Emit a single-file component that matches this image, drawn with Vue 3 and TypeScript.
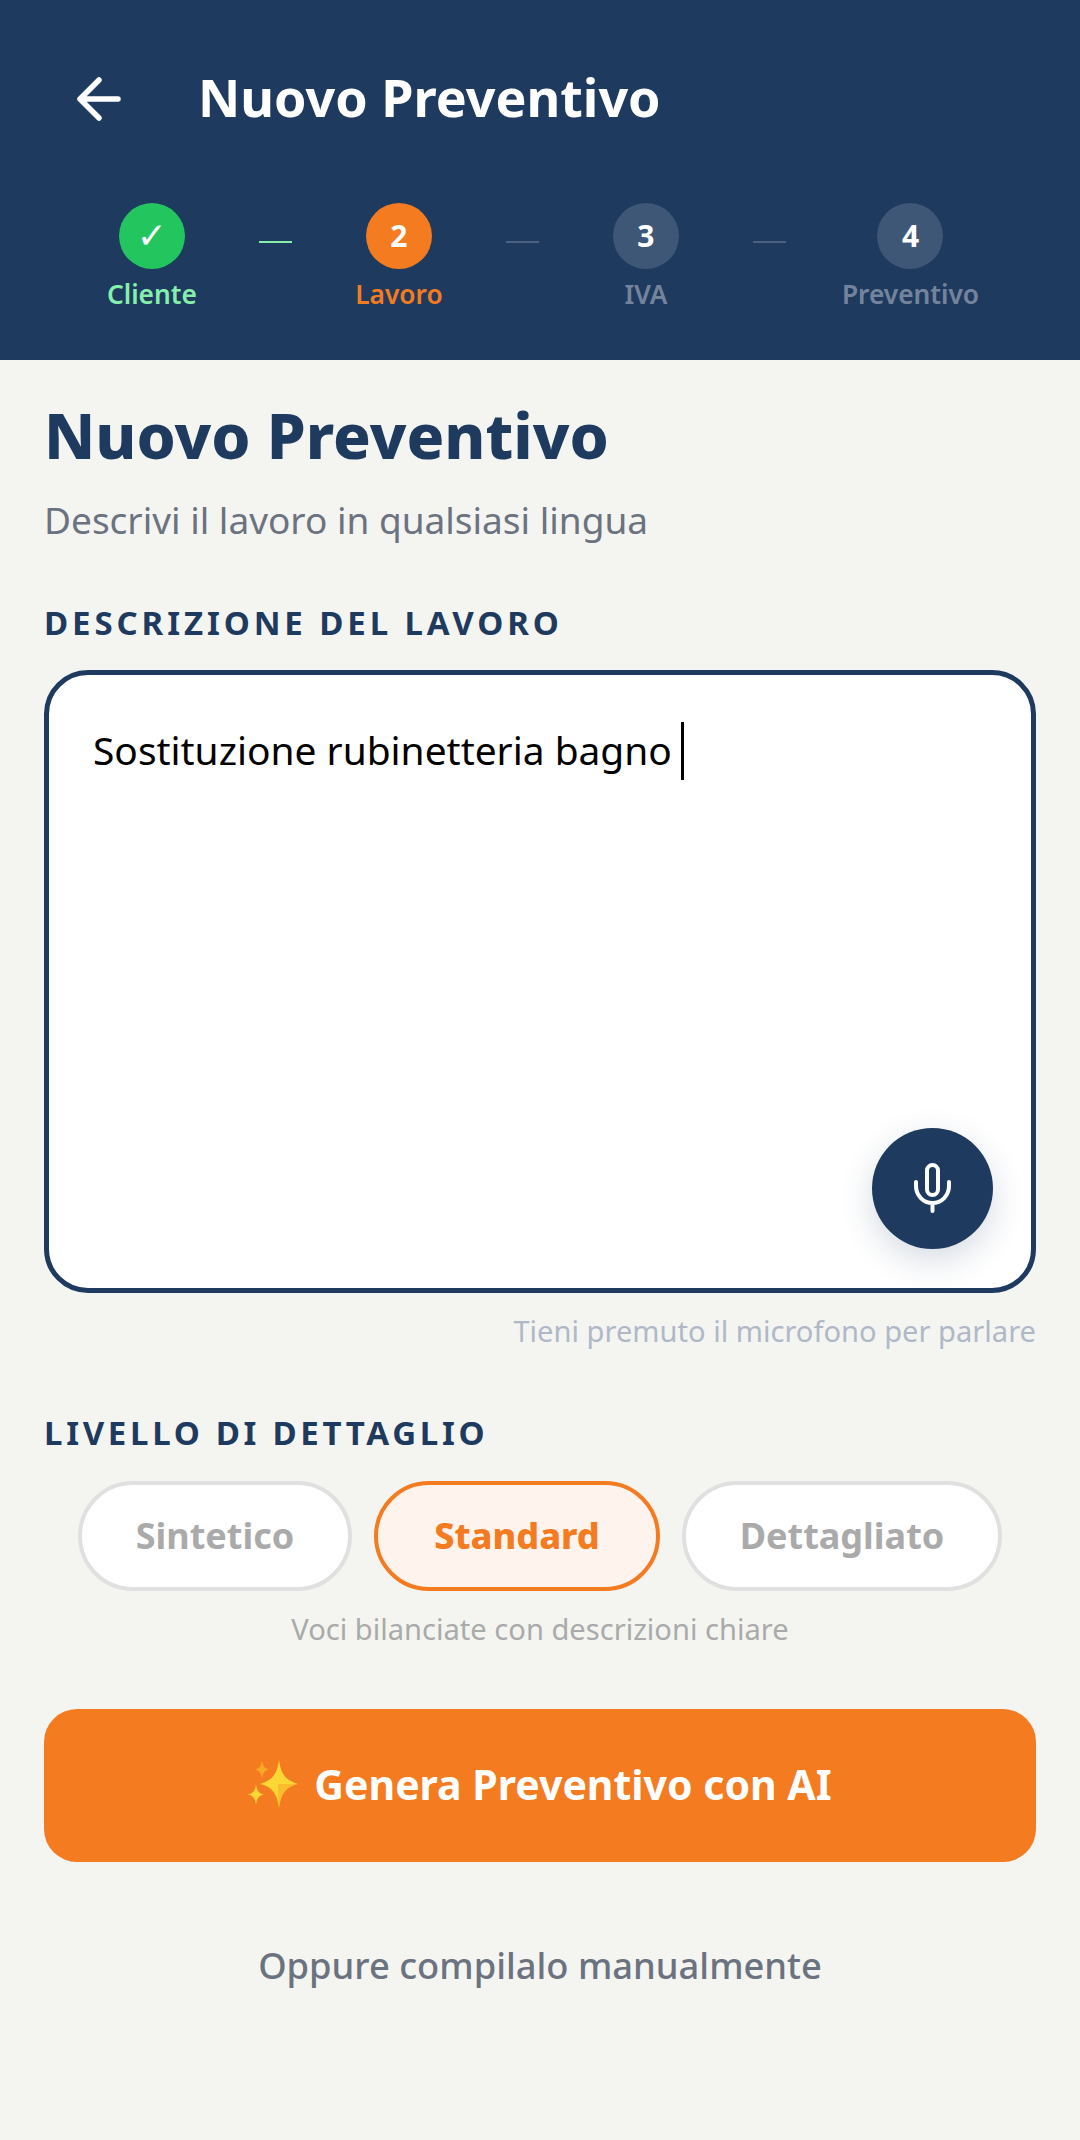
<script setup lang="ts">
interface Step {
  label: string;
  mark: string;
  state: 'done' | 'active' | 'todo';
}

const steps: Step[] = [
  { label: 'Cliente', mark: '✓', state: 'done' },
  { label: 'Lavoro', mark: '2', state: 'active' },
  { label: 'IVA', mark: '3', state: 'todo' },
  { label: 'Preventivo', mark: '4', state: 'todo' },
];

const levels = ['Sintetico', 'Standard', 'Dettagliato'];
const selected = 'Standard';
</script>

<template>
  <div class="page">
    <header class="top">
      <div class="top-row">
        <svg class="back" viewBox="0 0 44 44" fill="none" stroke="#fff" stroke-width="5.5" stroke-linecap="round" stroke-linejoin="round">
          <path d="M41 22H3M22 3L3 22l19 19" />
        </svg>
        <span class="top-title">Nuovo Preventivo</span>
      </div>
      <div class="steps">
        <template v-for="(step, i) in steps" :key="step.label">
          <div class="step" :class="step.state">
            <div class="dot">{{ step.mark }}</div>
            <div class="step-label">{{ step.label }}</div>
          </div>
          <div v-if="i < steps.length - 1" class="link" :class="{ done: step.state === 'done' }"></div>
        </template>
      </div>
    </header>

    <main class="content">
      <h1>Nuovo Preventivo</h1>
      <p class="sub">Descrivi il lavoro in qualsiasi lingua</p>

      <div class="label first">DESCRIZIONE DEL LAVORO</div>
      <div class="box">
        <span class="typed">Sostituzione rubinetteria bagno</span><span class="caret"></span>
        <button class="mic">
          <svg viewBox="0 0 37 50" width="37" height="50" fill="none" stroke="#fff" stroke-width="4" stroke-linecap="round">
            <rect x="13" y="2" width="11" height="30" rx="5.5" />
            <path d="M2 19v4a16.500 17 0 0 0 33 0v-4M18.500 41v7" />
          </svg>
        </button>
      </div>
      <div class="hint">Tieni premuto il microfono per parlare</div>

      <div class="label second">LIVELLO DI DETTAGLIO</div>
      <div class="chips">
        <div v-for="level in levels" :key="level" class="chip" :class="{ on: level === selected }">{{ level }}</div>
      </div>
      <div class="level-note">Voci bilanciate con descrizioni chiare</div>

      <button class="generate">
        <svg class="spark" viewBox="0 0 52 52">
          <path d="M31 2c2 14 6 20 19 24-13 3-17 10-19 24-2-14-6-21-19-24 13-4 17-10 19-24z" fill="#fdd835" />
          <path d="M31 50c-.5-8-1-14-1-24l20 0c-13 3-17 10-19 24z" fill="#f9a825" opacity=".55" />
          <path d="M14 2c.8 6 2.200 8 7 9.500-4.800 1.300-6.200 3.500-7 9.500-.8-6-2.200-8.200-7-9.500 4.800-1.500 6.200-3.500 7-9.500z" fill="#f9a825" />
          <path d="M8 26c.8 6.500 2.400 9 8 10.500-5.600 1.500-7.200 4-8 10.500-.8-6.500-2.400-9-8-10.500 5.600-1.500 7.200-4 8-10.500z" fill="#fdd835" />
        </svg>
        <span>Genera Preventivo con AI</span>
      </button>

      <div class="manual">Oppure compilalo manualmente</div>
    </main>
  </div>
</template>

<style>
html,
body {
  margin: 0;
  background: #f4f5f0;
}
</style>

<style scoped>
.page {
  min-height: 2140px;
  background: #f4f5f0;
  font-family: "Noto Sans", "Open Sans", sans-serif;
}

.top {
  background: #1e3a5f;
  padding: 66px 0 47px;
}

.top-row {
  display: flex;
  align-items: center;
  padding-left: 77px;
  height: 62px;
}

.back {
  width: 44px;
  height: 44px;
  margin-top: 4px;
  margin-right: 77px;
}

.top-title {
  color: #fff;
  font-size: 52px;
  line-height: 60px;
  font-weight: 700;
}

.steps {
  display: flex;
  justify-content: center;
  gap: 56px;
  margin-top: 75px;
}

.step {
  min-width: 102px;
  display: flex;
  flex-direction: column;
  align-items: center;
}

.dot {
  box-sizing: border-box;
  width: 66px;
  height: 66px;
  padding-bottom: 2px;
  border-radius: 50%;
  display: flex;
  align-items: center;
  justify-content: center;
  color: #fff;
  font-size: 30px;
  font-weight: 700;
  background: rgba(255, 255, 255, 0.15);
}

.step.done .dot {
  background: #22c55e;
  font-family: "DejaVu Sans", sans-serif;
  font-size: 36px;
}

.step.active .dot {
  background: #f47b20;
}

.step-label {
  margin-top: 7px;
  margin-bottom: 1px;
  font-size: 26.300px;
  line-height: 36px;
  font-weight: 600;
  color: rgba(255, 255, 255, 0.4);
}

.step.done .step-label {
  color: #86efac;
}

.step.active .step-label {
  color: #f47b20;
}

.link {
  width: 33px;
  height: 2px;
  margin-top: 38px;
  background: rgba(255, 255, 255, 0.2);
}

.link.done {
  background: #86efac;
}

.content {
  padding: 35px 44px 0;
}

h1 {
  margin: 0;
  color: #1e3a5f;
  font-size: 62.4px;
  line-height: 80px;
  font-weight: 800;
}

.sub {
  margin: 20px 0 0;
  color: #6b7280;
  font-size: 37px;
  line-height: 50px;
}

.label {
  color: #1e3a5f;
  font-size: 33px;
  line-height: 40px;
  font-weight: 700;
  letter-spacing: 3.7px;
}

.label.first {
  margin-top: 58px;
  letter-spacing: 3.9px;
}

.label.second {
  margin-top: 62px;
}

.box {
  position: relative;
  box-sizing: border-box;
  height: 623px;
  margin-top: 27px;
  padding: 47px 44px 0;
  background: #fff;
  border: 5.5px solid #1e3a5f;
  border-radius: 44px;
  display: flex;
  align-items: flex-start;
}

.typed {
  color: #000;
  font-size: 38.900px;
  line-height: 56px;
}

.caret {
  width: 3px;
  height: 58px;
  margin-left: 9px;
  background: #000;
}

.mic {
  position: absolute;
  right: 38px;
  bottom: 39px;
  width: 121px;
  height: 121px;
  padding: 0 0 2px;
  border: 0;
  border-radius: 50%;
  background: #1e3a5f;
  box-shadow: 0 11px 33px rgba(30, 58, 95, 0.18);
  display: flex;
  align-items: center;
  justify-content: center;
}

.hint {
  margin-top: 18px;
  text-align: right;
  color: #b0b8c8;
  font-size: 29.100px;
  line-height: 40px;
}

.chips {
  display: grid;
  grid-template-columns: 274px 286px 320px;
  justify-content: center;
  gap: 22px;
  margin-top: 28px;
}

.chip {
  box-sizing: border-box;
  height: 110px;
  padding-bottom: 2px;
  display: flex;
  align-items: center;
  justify-content: center;
  background: #fff;
  border: 4px solid #e0e0e0;
  border-radius: 55px;
  color: #aaa;
  font-size: 36px;
  font-weight: 700;
}

.chip.on {
  background: #fff3ee;
  border-color: #f47b20;
  color: #f47b20;
  font-weight: 800;
}

.level-note {
  margin-top: 18px;
  text-align: center;
  color: #aaa;
  font-size: 29.100px;
  line-height: 40px;
}

.generate {
  box-sizing: border-box;
  width: 100%;
  height: 153px;
  margin-top: 60px;
  padding: 0 0 3px;
  border: 0;
  border-radius: 33px;
  background: #f47b20;
  color: #fff;
  font-family: inherit;
  font-size: 41px;
  font-weight: 700;
  display: flex;
  align-items: center;
  justify-content: center;
  gap: 14px;
}

.spark {
  width: 52px;
  height: 52px;
}

.manual {
  margin-top: 78px;
  text-align: center;
  color: #6b7280;
  font-size: 36.300px;
  line-height: 50px;
  font-weight: 500;
}
</style>
